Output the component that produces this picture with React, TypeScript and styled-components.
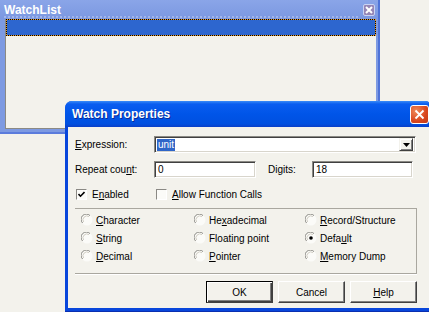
import styled, { createGlobalStyle } from "styled-components";

const GlobalStyle = createGlobalStyle`
  html, body { margin: 0; padding: 0; }
  body {
    width: 429px;
    height: 312px;
    overflow: hidden;
    background: #f3f2ec;
    font-family: "Liberation Sans", Arial, sans-serif;
    font-size: 10px;
    color: #000;
  }
`;

const Desktop = styled.div`
  position: relative;
  width: 429px;
  height: 312px;
  overflow: hidden;
  background: #f3f2ec;
`;

/* ---------- WatchList tool window (inactive) ---------- */

const ToolWindow = styled.div`
  width: 380px;
  height: 134px;
  box-sizing: border-box;
  display: flex;
  flex-direction: column;
  background: #7d9ae2;
  border-right: 2px solid #4f73d8;
  border-bottom: 2px solid #5b7cdc;
`;

const ToolTitle = styled.div`
  position: relative;
  height: 19px;
  flex: none;
  display: flex;
  align-items: center;
  justify-content: space-between;
  padding: 0 2px 0 4px;
  color: #fff;
  font-weight: bold;
  font-size: 12px;
  background: linear-gradient(#8aa5e8, #7b98e1);

  &::after {
    content: "";
    position: absolute;
    left: 4px;
    right: 20px;
    bottom: 1px;
    height: 2px;
    background: repeating-linear-gradient(90deg, #a9bcef 0 2px, transparent 2px 4px);
    opacity: 0.8;
  }
`;

const SmallClose = styled.div`
  width: 12px;
  height: 12px;
  box-sizing: border-box;
  border: 1px solid #c9d3f3;
  border-radius: 2px;
  background: #9586b6;
  display: flex;
  align-items: center;
  justify-content: center;
  margin-right: 1px;
`;

const ListArea = styled.div`
  flex: 1;
  margin: 0 2px 3px 5px;
  background: #f3f2ec;
  border-left: 1px solid #8b8a84;
  border-bottom: 1px solid #8b8a84;
`;

const SelectedRow = styled.div`
  height: 17px;
  background:
    repeating-linear-gradient(90deg, #000 0 1px, #e99b2b 1px 2px) top / 100% 1px no-repeat,
    repeating-linear-gradient(90deg, #000 0 1px, #e99b2b 1px 2px) bottom / 100% 1px no-repeat,
    repeating-linear-gradient(180deg, #000 0 1px, #e99b2b 1px 2px) left / 1px 100% no-repeat,
    repeating-linear-gradient(180deg, #000 0 1px, #e99b2b 1px 2px) right / 1px 100% no-repeat,
    #2d66cf;
`;

/* ---------- Watch Properties dialog (active) ---------- */

const Dialog = styled.div`
  position: absolute;
  left: 65px;
  top: 101px;
  width: 367px;
  height: 211px;
  box-sizing: border-box;
  display: flex;
  flex-direction: column;
  background: #0846db;
  border-radius: 7px 7px 0 0;
  padding: 0 3px 3px 3px;
  border-bottom: 1px solid #0a2fb0;
`;

const DialogTitle = styled.div`
  height: 26px;
  flex: none;
  margin: 0 -3px;
  padding: 0 3px 0 7px;
  display: flex;
  align-items: center;
  justify-content: space-between;
  border-radius: 7px 7px 0 0;
  background: linear-gradient(#3a8cf7 0, #0a5df0 3px, #0055e8 50%, #0050e0 88%, #0a3fc8 100%);
  color: #fff;
  font-weight: bold;
  font-size: 12px;
  text-shadow: 1px 1px #0b2c98;
`;

const CloseButton = styled.div`
  width: 19px;
  height: 19px;
  box-sizing: border-box;
  border: 1px solid #fff;
  border-radius: 3px;
  background: radial-gradient(circle at 30% 30%, #ef8a5a, #d9461e 60%, #c23a16);
  display: flex;
  align-items: center;
  justify-content: center;
`;

const Client = styled.div`
  flex: 1;
  background: #f3f2ec;
  padding: 9px 0 0 7px;
  display: flex;
  flex-direction: column;
`;

const FieldRow = styled.div<{ $gap?: number }>`
  display: flex;
  align-items: center;
  height: 17px;
  margin-bottom: ${(p) => p.$gap ?? 8}px;
`;

const Label = styled.span<{ $width?: number; $indent?: number }>`
  display: inline-block;
  width: ${(p) => (p.$width ? `${p.$width}px` : "auto")};
  margin-left: ${(p) => p.$indent ?? 0}px;
  white-space: nowrap;
`;

const Key = styled.span`
  text-decoration: underline;
`;

const sunken = `
  box-sizing: border-box;
  border-top: 1px solid #8a8984;
  border-left: 1px solid #8a8984;
  border-right: 1px solid #fff;
  border-bottom: 1px solid #fff;
  box-shadow: inset 1px 1px #404040, inset -1px -1px #d8d5cc;
`;

const Combo = styled.div`
  ${sunken}
  width: 262px;
  height: 17px;
  background: #fff;
  display: flex;
  align-items: center;
  justify-content: space-between;
  padding: 0 2px 0 2px;
`;

const Selected = styled.span`
  background: #2f66c8;
  color: #fff;
  padding: 0 1px;
  line-height: 12px;
`;

const DropButton = styled.div`
  width: 14px;
  height: 13px;
  box-sizing: border-box;
  background: #f3f2ec;
  border-top: 1px solid #f3f2ec;
  border-left: 1px solid #f3f2ec;
  box-shadow: inset 1px 1px #fff, inset -1px -1px #808080;
  border-right: 1px solid #404040;
  border-bottom: 1px solid #404040;
  display: flex;
  align-items: center;
  justify-content: center;
`;

const TextBox = styled.div<{ $width: number }>`
  ${sunken}
  width: ${(p) => p.$width}px;
  height: 17px;
  background: #fff;
  padding-left: 3px;
  display: flex;
  align-items: center;
`;

const CheckRow = styled.div`
  display: flex;
  align-items: center;
  height: 14px;
  margin-top: 1px;
`;

const Check = styled.label<{ $width?: number }>`
  display: flex;
  align-items: center;
  gap: 5px;
  width: ${(p) => (p.$width ? `${p.$width}px` : "auto")};
  padding-left: 1px;
`;

const Box = styled.span`
  width: 11px;
  height: 11px;
  box-sizing: border-box;
  border-top: 1px solid #8a8984;
  border-left: 1px solid #8a8984;
  border-right: 1px solid #fff;
  border-bottom: 1px solid #fff;
  background: #fbfbf8;
  display: flex;
  align-items: center;
  justify-content: center;
`;

const Group = styled.div`
  width: 342px;
  height: 66px;
  box-sizing: border-box;
  margin-top: 7px;
  border-top: 1px solid #a9a79f;
  border-bottom: 1px solid #a9a79f;
  border-right: 1px solid #a9a79f;
  box-shadow: 0 1px #fff;
  padding: 2px 0 0 6px;
  display: grid;
  grid-template-columns: 113px 111px 1fr;
  grid-auto-rows: 18px;
`;

const Radio = styled.label`
  display: flex;
  align-items: center;
  gap: 3px;
  white-space: nowrap;
`;

const Buttons = styled.div`
  width: 342px;
  display: flex;
  justify-content: flex-end;
  gap: 5px;
  margin-top: 7px;
`;

const Button = styled.button<{ $default?: boolean }>`
  width: 67px;
  height: 22px;
  box-sizing: border-box;
  padding: 0;
  background: #f3f2ec;
  font: inherit;
  color: #000;
  border: 1px solid ${(p) => (p.$default ? "#000" : "#f3f2ec")};
  border-top-color: ${(p) => (p.$default ? "#000" : "#fff")};
  border-left-color: ${(p) => (p.$default ? "#000" : "#fff")};
  border-right-color: #404040;
  border-bottom-color: #404040;
  box-shadow: ${(p) =>
    p.$default
      ? "inset 1px 1px #fff, inset -1px -1px #404040, inset -2px -2px #808080"
      : "inset -1px -1px #808080"};
`;

const RadioMark = ({ on }: { on?: boolean }) => (
  <svg width="12" height="12" viewBox="0 0 12 12">
    <circle cx="6" cy="6" r="5.5" fill="#fbfbf8" />
    <path d="M1.6 9 A5 5 0 0 1 9 1.6" fill="none" stroke="#8a8984" strokeWidth="1" />
    <path d="M2.6 8 A3.9 3.9 0 0 1 8 2.6" fill="none" stroke="#d0cdc3" strokeWidth="1" />
    {on && <circle cx="6" cy="6" r="1.8" fill="#000" />}
  </svg>
);

const radios: { text: [string, string, string]; on?: boolean }[] = [
  { text: ["", "C", "haracter"] },
  { text: ["He", "x", "adecimal"] },
  { text: ["", "R", "ecord/Structure"] },
  { text: ["", "S", "tring"] },
  { text: ["Floatin", "g", " point"] },
  { text: ["Defa", "u", "lt"], on: true },
  { text: ["", "D", "ecimal"] },
  { text: ["", "P", "ointer"] },
  { text: ["", "M", "emory Dump"] },
];

export default function App() {
  return (
    <Desktop>
      <GlobalStyle />
      <ToolWindow>
        <ToolTitle>
          <span>WatchList</span>
          <SmallClose>
            <svg width="8" height="8" viewBox="0 0 8 8">
              <path d="M1 1 L7 7 M7 1 L1 7" stroke="#fff" strokeWidth="2" />
            </svg>
          </SmallClose>
        </ToolTitle>
        <ListArea>
          <SelectedRow />
        </ListArea>
      </ToolWindow>

      <Dialog>
        <DialogTitle>
          <span>Watch Properties</span>
          <CloseButton>
            <svg width="11" height="11" viewBox="0 0 11 11">
              <path d="M1.5 1.5 L9.5 9.5 M9.5 1.5 L1.5 9.5" stroke="#fff" strokeWidth="1.8" />
            </svg>
          </CloseButton>
        </DialogTitle>
        <Client>
          <FieldRow>
            <Label $width={79}>
              <Key>E</Key>xpression:
            </Label>
            <Combo>
              <Selected>unit</Selected>
              <DropButton>
                <svg width="7" height="4" viewBox="0 0 7 4">
                  <path d="M0 0 H7 L3.5 4 Z" fill="#000" />
                </svg>
              </DropButton>
            </Combo>
          </FieldRow>
          <FieldRow>
            <Label $width={79}>
              Repeat cou<Key>n</Key>t:
            </Label>
            <TextBox $width={102}>0</TextBox>
            <Label $width={44} $indent={12}>
              Digits:
            </Label>
            <TextBox $width={101}>18</TextBox>
          </FieldRow>
          <CheckRow>
            <Check $width={79}>
              <Box>
                <svg width="7" height="7" viewBox="0 0 7 7">
                  <path d="M0.5 3 L2.5 5.2 L6.5 1" fill="none" stroke="#000" strokeWidth="1.6" />
                </svg>
              </Box>
              <span>
                E<Key>n</Key>abled
              </span>
            </Check>
            <Check>
              <Box />
              <span>
                <Key>A</Key>llow Function Calls
              </span>
            </Check>
          </CheckRow>
          <Group>
            {radios.map((r, i) => (
              <Radio key={i}>
                <RadioMark on={r.on} />
                <span>
                  {r.text[0]}
                  <Key>{r.text[1]}</Key>
                  {r.text[2]}
                </span>
              </Radio>
            ))}
          </Group>
          <Buttons>
            <Button $default>OK</Button>
            <Button>Cancel</Button>
            <Button>
              <Key>H</Key>elp
            </Button>
          </Buttons>
        </Client>
      </Dialog>
    </Desktop>
  );
}
